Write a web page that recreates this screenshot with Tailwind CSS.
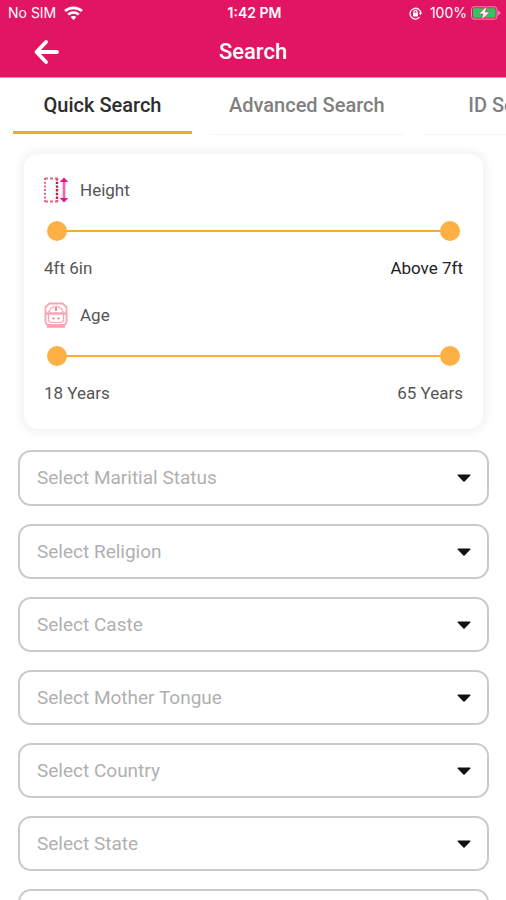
<!DOCTYPE html>
<html lang="en">
<head>
<meta charset="utf-8">
<meta name="viewport" content="width=device-width, initial-scale=1">
<title>Search</title>
<script src="https://cdn.jsdelivr.net/npm/@tailwindcss/browser@4"></script>
</head>
<body class="bg-white font-['Roboto',sans-serif] text-[#555]">
<div class="flex h-screen flex-col">
  <header class="shrink-0 border-b border-[#f78fb0] bg-[#e11564] text-white">
    <div class="grid h-[26px] grid-cols-3 items-center pl-2 pr-[5px] font-['Inter',sans-serif] text-[14px] leading-4">
      <div class="flex items-center gap-2">
        <span>No SIM</span>
        <svg class="h-[14px] w-[19px]" viewBox="0 0 19 14" fill="none" stroke="currentColor" aria-label="Wi-Fi">
          <path d="M1 5C5.800.800 13.200.800 18 5" stroke-width="2.900"/>
          <path d="M4.200 8.600c3-2.800 7.600-2.800 10.600 0" stroke-width="2.500"/>
          <path d="M9.500 14 6.600 11c1.600-1.500 4.200-1.500 5.800 0z" fill="currentColor" stroke="none"/>
        </svg>
      </div>
      <span class="text-center font-semibold">1:42 PM</span>
      <div class="flex items-center justify-end gap-1">
        <svg class="mr-1 h-[13px] w-[13px]" viewBox="0 0 13 13" fill="none" stroke="currentColor" stroke-width="1.300" aria-label="Rotation lock">
          <path d="M10.600 10.200A5.400 5.400 0 1 1 11.900 6.500"/>
          <path d="M9.800 5.800h3.200l-1.500 2.400z" fill="currentColor" stroke="none"/>
          <rect x="4" y="5.800" width="5" height="3.700" rx=".6" fill="currentColor" stroke="none"/>
          <path d="M5 6V4.800a1.500 1.500 0 0 1 3 0V6"/>
        </svg>
        <span>100%</span>
        <svg class="h-[14px] w-[30px]" viewBox="0 0 30 14" aria-label="Battery charging">
          <rect x=".5" y=".8" width="25.500" height="12.400" rx="2.500" fill="none" stroke="#f190b4"/>
          <rect x="2" y="2.300" width="22.500" height="9.400" rx="1.200" fill="#2fc75b"/>
          <path d="M27 4.500 29.800 7 27 9.500z" fill="#f190b4"/>
          <path d="M16 0 7.500 8h4.600l-1.800 6L19 6h-4.700z" fill="#fff" stroke="#e11564" stroke-width=".6"/>
        </svg>
      </div>
    </div>
    <div class="grid h-[51px] grid-cols-[1fr_auto_1fr] items-center px-[32px]">
      <button type="button" aria-label="Back" class="justify-self-start">
        <svg class="block h-[28px] w-[28px]" viewBox="0 0 28 28" fill="none" stroke="currentColor" stroke-width="3.800" stroke-linecap="round" stroke-linejoin="round">
          <path d="M25 14H4.500M14 4 4.500 14l9.500 10"/>
        </svg>
      </button>
      <h1 class="text-[22px] font-medium leading-7">Search</h1>
    </div>
  </header>

  <nav aria-label="Search type" class="flex shrink-0 gap-[18px] overflow-x-auto pl-[13px] text-[20px] font-medium leading-6 text-[#808080] [scrollbar-width:none]">
    <a href="#quick" aria-current="page" class="flex h-[56px] min-w-[179px] shrink-0 items-center justify-center border-b-[3px] border-[#f2a931] px-[19px] text-[#2e2e2e]">Quick Search</a>
    <a href="#advanced" class="flex h-[57px] min-w-[179px] shrink-0 items-center justify-center border-b border-[#f5f5f5] px-[19px] pb-[3px]">Advanced Search</a>
    <a href="#id" class="flex h-[57px] min-w-[179px] shrink-0 items-center justify-center border-b border-[#f5f5f5] px-[19px] pb-[3px]">ID Search</a>
  </nav>

  <main class="min-h-0 flex-1 overflow-y-auto [scrollbar-width:none]">
    <form class="flex flex-col pb-6 pt-[19px]">
      <section class="ml-6 mr-[23px] flex flex-col gap-[22px] rounded-[14px] bg-white px-5 pb-6 pt-[23px] text-[17px] leading-6 shadow-[0_0_8px_4px_rgba(0,0,0,0.05)]">
        <fieldset>
          <div class="flex items-center gap-3">
            <svg class="h-[26px] w-6" viewBox="0 0 24 26" fill="none" aria-hidden="true">
              <path d="M1 1v24" stroke="#ec6480" stroke-width="2" stroke-dasharray="2 1.700"/>
              <path d="M13 1v24" stroke="#d3174a" stroke-width="2.400" stroke-dasharray="2.400 1.300"/>
              <path d="M1 1.500h13M1 24.500h13" stroke="#e66a82" stroke-width="2" stroke-dasharray="3 2"/>
              <path d="M20 4v18" stroke="#f45fae" stroke-width="2.600"/>
              <path d="m20 .5 4.300 4.500h-8.600zM20 25.500l4.300-4.500h-8.600z" fill="#e8148c"/>
            </svg>
            <h2>Height</h2>
          </div>
          <div class="mx-[3px] mt-[18px] grid h-5 items-center">
            <span class="col-start-1 row-start-1 mx-2 h-[2px] bg-[#fbab33]"></span>
            <input type="range" aria-label="Minimum height" min="54" max="84" value="54" class="pointer-events-none col-start-1 row-start-1 h-5 w-full appearance-none bg-transparent [&::-webkit-slider-thumb]:pointer-events-auto [&::-webkit-slider-thumb]:h-5 [&::-webkit-slider-thumb]:w-5 [&::-webkit-slider-thumb]:appearance-none [&::-webkit-slider-thumb]:rounded-full [&::-webkit-slider-thumb]:bg-[#ffb045]">
            <input type="range" aria-label="Maximum height" min="54" max="84" value="84" class="pointer-events-none col-start-1 row-start-1 h-5 w-full appearance-none bg-transparent [&::-webkit-slider-thumb]:pointer-events-auto [&::-webkit-slider-thumb]:h-5 [&::-webkit-slider-thumb]:w-5 [&::-webkit-slider-thumb]:appearance-none [&::-webkit-slider-thumb]:rounded-full [&::-webkit-slider-thumb]:bg-[#ffb045]">
          </div>
          <div class="mt-[15px] flex justify-between">
            <span>4ft 6in</span><span class="text-[#222]">Above 7ft</span>
          </div>
        </fieldset>
        <fieldset>
          <div class="flex items-center gap-3">
            <svg class="h-[26px] w-6" viewBox="0 0 24 26" fill="none" stroke="#f9a3b2" stroke-width="1.800" aria-hidden="true">
              <path d="M1.500 8V5L5.500 1.500h13L22.500 5v3"/>
              <path d="M5 10C5.500 6.500 8.500 4.500 12 4.500s6.500 2 7 5.500" stroke-dasharray="2 1"/>
              <path d="M1.500 8v12.500l2 2.500h17l2-2.500V8"/>
              <path d="M4.500 12v7l2 1.500h11l2-1.500v-7" stroke-width="1.200"/>
              <path d="M2 11.500h20" stroke-width="2.400"/>
              <path d="M12 5v4M8.500 16.500h2M13.500 16.500h2" stroke="#ee6a84" stroke-width="1.500"/>
              <path d="M3 24.800h18" stroke-width="2"/>
            </svg>
            <h2>Age</h2>
          </div>
          <div class="mx-[3px] mt-[18px] grid h-5 items-center">
            <span class="col-start-1 row-start-1 mx-2 h-[2px] bg-[#fbab33]"></span>
            <input type="range" aria-label="Minimum age" min="18" max="65" value="18" class="pointer-events-none col-start-1 row-start-1 h-5 w-full appearance-none bg-transparent [&::-webkit-slider-thumb]:pointer-events-auto [&::-webkit-slider-thumb]:h-5 [&::-webkit-slider-thumb]:w-5 [&::-webkit-slider-thumb]:appearance-none [&::-webkit-slider-thumb]:rounded-full [&::-webkit-slider-thumb]:bg-[#ffb045]">
            <input type="range" aria-label="Maximum age" min="18" max="65" value="65" class="pointer-events-none col-start-1 row-start-1 h-5 w-full appearance-none bg-transparent [&::-webkit-slider-thumb]:pointer-events-auto [&::-webkit-slider-thumb]:h-5 [&::-webkit-slider-thumb]:w-5 [&::-webkit-slider-thumb]:appearance-none [&::-webkit-slider-thumb]:rounded-full [&::-webkit-slider-thumb]:bg-[#ffb045]">
          </div>
          <div class="mt-[15px] flex justify-between">
            <span>18 Years</span><span>65 Years</span>
          </div>
        </fieldset>
      </section>

      <div class="mt-[21px] flex flex-col gap-[18px] pl-[18px] pr-[17px] text-[19px] leading-6 text-[#b0b0b0]">
        <div class="grid items-center">
          <select aria-label="Marital status" class="col-start-1 row-start-1 h-[56px] w-full appearance-none rounded-[13px] border-2 border-[#cacaca] bg-white px-[17px]"><option>Select Maritial Status</option></select>
          <svg class="pointer-events-none col-start-1 row-start-1 mr-[18px] h-2 w-[14px] justify-self-end" viewBox="0 0 14 8" fill="#111" aria-hidden="true"><path d="M1 .5h12a.6.6 0 0 1 .4 1L7.600 7.600a.9.900 0 0 1-1.200 0L.6 1.500a.6.6 0 0 1 .4-1z"/></svg>
        </div>
        <div class="grid items-center">
          <select aria-label="Religion" class="col-start-1 row-start-1 h-[55px] w-full appearance-none rounded-[13px] border-2 border-[#cacaca] bg-white px-[17px]"><option>Select Religion</option></select>
          <svg class="pointer-events-none col-start-1 row-start-1 mr-[18px] h-2 w-[14px] justify-self-end" viewBox="0 0 14 8" fill="#111" aria-hidden="true"><path d="M1 .5h12a.6.6 0 0 1 .4 1L7.600 7.600a.9.900 0 0 1-1.200 0L.6 1.500a.6.6 0 0 1 .4-1z"/></svg>
        </div>
        <div class="grid items-center">
          <select aria-label="Caste" class="col-start-1 row-start-1 h-[55px] w-full appearance-none rounded-[13px] border-2 border-[#cacaca] bg-white px-[17px]"><option>Select Caste</option></select>
          <svg class="pointer-events-none col-start-1 row-start-1 mr-[18px] h-2 w-[14px] justify-self-end" viewBox="0 0 14 8" fill="#111" aria-hidden="true"><path d="M1 .5h12a.6.6 0 0 1 .4 1L7.600 7.600a.9.900 0 0 1-1.200 0L.6 1.500a.6.6 0 0 1 .4-1z"/></svg>
        </div>
        <div class="grid items-center">
          <select aria-label="Mother tongue" class="col-start-1 row-start-1 h-[55px] w-full appearance-none rounded-[13px] border-2 border-[#cacaca] bg-white px-[17px]"><option>Select Mother Tongue</option></select>
          <svg class="pointer-events-none col-start-1 row-start-1 mr-[18px] h-2 w-[14px] justify-self-end" viewBox="0 0 14 8" fill="#111" aria-hidden="true"><path d="M1 .5h12a.6.6 0 0 1 .4 1L7.600 7.600a.9.900 0 0 1-1.200 0L.6 1.500a.6.6 0 0 1 .4-1z"/></svg>
        </div>
        <div class="grid items-center">
          <select aria-label="Country" class="col-start-1 row-start-1 h-[55px] w-full appearance-none rounded-[13px] border-2 border-[#cacaca] bg-white px-[17px]"><option>Select Country</option></select>
          <svg class="pointer-events-none col-start-1 row-start-1 mr-[18px] h-2 w-[14px] justify-self-end" viewBox="0 0 14 8" fill="#111" aria-hidden="true"><path d="M1 .5h12a.6.6 0 0 1 .4 1L7.600 7.600a.9.900 0 0 1-1.200 0L.6 1.500a.6.6 0 0 1 .4-1z"/></svg>
        </div>
        <div class="grid items-center">
          <select aria-label="State" class="col-start-1 row-start-1 h-[55px] w-full appearance-none rounded-[13px] border-2 border-[#cacaca] bg-white px-[17px]"><option>Select State</option></select>
          <svg class="pointer-events-none col-start-1 row-start-1 mr-[18px] h-2 w-[14px] justify-self-end" viewBox="0 0 14 8" fill="#111" aria-hidden="true"><path d="M1 .5h12a.6.6 0 0 1 .4 1L7.600 7.600a.9.900 0 0 1-1.200 0L.6 1.500a.6.6 0 0 1 .4-1z"/></svg>
        </div>
        <div class="grid items-center">
          <select aria-label="More criteria" class="col-start-1 row-start-1 h-[55px] w-full appearance-none rounded-[13px] border-2 border-[#cacaca] bg-white px-[17px]"></select>
        </div>
      </div>
    </form>
  </main>
</div>
</body>
</html>
